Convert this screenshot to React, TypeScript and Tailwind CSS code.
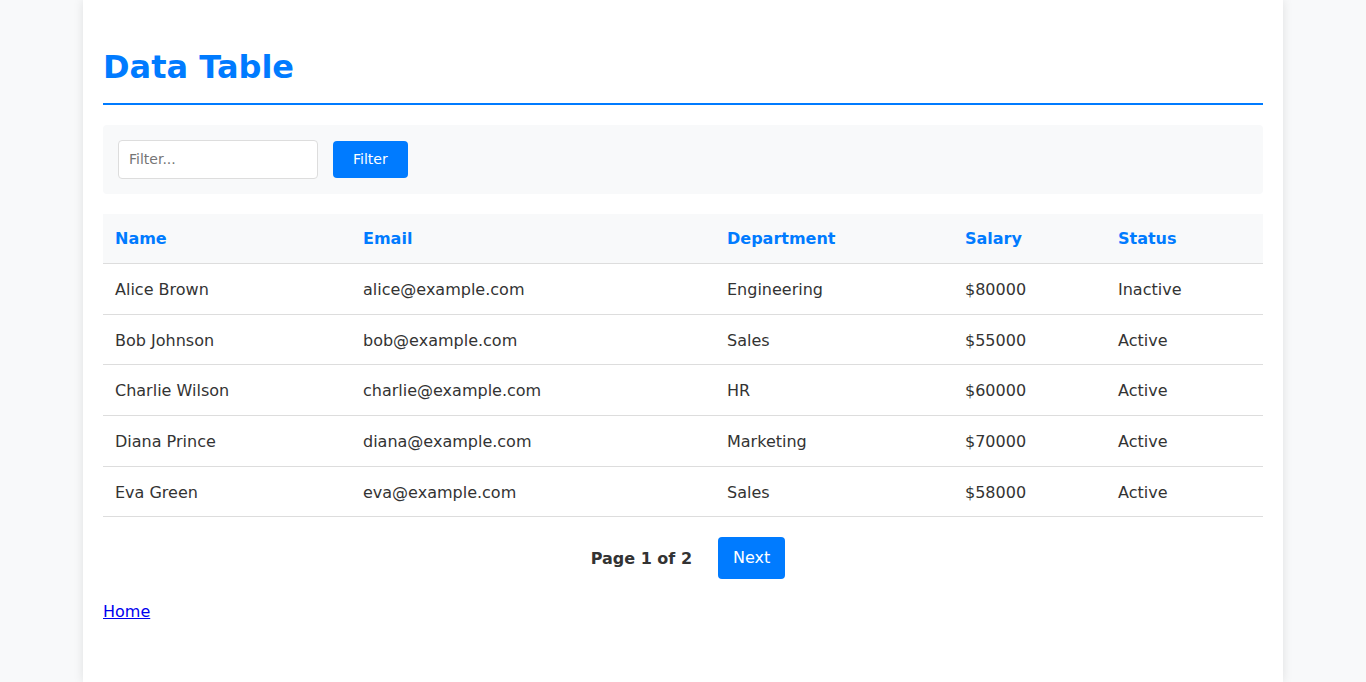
import React from "react";

const rows = [
  ["Alice Brown", "alice@example.com", "Engineering", "$80000", "Inactive"],
  ["Bob Johnson", "bob@example.com", "Sales", "$55000", "Active"],
  ["Charlie Wilson", "charlie@example.com", "HR", "$60000", "Active"],
  ["Diana Prince", "diana@example.com", "Marketing", "$70000", "Active"],
  ["Eva Green", "eva@example.com", "Sales", "$58000", "Active"],
];

export default function App() {
  return (
    <div
      className="min-h-screen bg-[#f8f9fa] text-[#333] leading-[1.6]"
      style={{ fontFamily: '"DejaVu Sans", sans-serif' }}
    >
      <div className="mx-auto w-[1200px] min-h-screen bg-white p-5 shadow-[0_0_10px_rgba(0,0,0,0.1)]">
        <h1 className="mt-[22.44px] mb-5 border-b-2 border-[#007bff] pb-[9px] text-[32px] font-bold leading-[1.6] text-[#007bff]">
          Data Table
        </h1>
        <div className="mb-5 flex items-center gap-[15px] rounded-[4px] bg-[#f8f9fa] p-[15px]">
          <input
            className="h-[39px] w-[200px] rounded-[4px] border border-[#ddd] bg-white px-[10px] text-[14px] placeholder:text-[#757575]"
            placeholder="Filter..."
          />
          <button className="h-[37px] rounded-[4px] bg-[#007bff] px-5 text-[14px] text-white">
            Filter
          </button>
        </div>
        <table className="w-full border-collapse text-[16px]">
          <thead>
            <tr className="bg-[#f8f9fa] border-b border-[#ddd]">
              <th className="w-[248px] p-3 text-left font-bold text-[#007bff]">Name</th>
              <th className="w-[364px] p-3 text-left font-bold text-[#007bff]">Email</th>
              <th className="w-[238px] p-3 text-left font-bold text-[#007bff]">Department</th>
              <th className="w-[153px] p-3 text-left font-bold text-[#007bff]">Salary</th>
              <th className="p-3 text-left font-bold text-[#007bff]">Status</th>
            </tr>
          </thead>
          <tbody>
            {rows.map((r) => (
              <tr key={r[0]} className="border-b border-[#ddd]">
                {r.map((c, i) => (
                  <td key={i} className="px-3 pt-[13px] pb-[11px] text-left">
                    {c}
                  </td>
                ))}
              </tr>
            ))}
          </tbody>
        </table>
        <div className="mt-5 flex items-center justify-center">
          <span className="ml-[10px] mr-[26px] pt-[2px] font-bold">Page 1 of 2</span>
          <button className="rounded-[4px] bg-[#007bff] px-[15px] py-2 text-[16px] text-white">
            Next
          </button>
        </div>
        <div className="mt-5">
          <a href="#" className="text-[#0000ee] underline">
            Home
          </a>
        </div>
      </div>
    </div>
  );
}
